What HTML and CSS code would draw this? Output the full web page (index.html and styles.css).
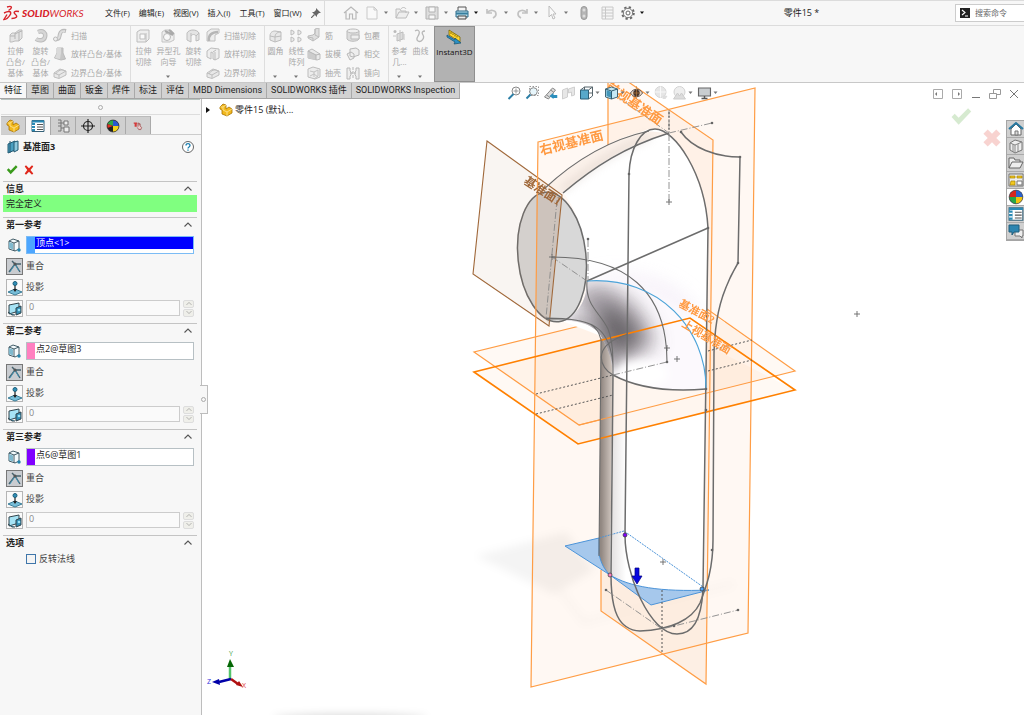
FILE: index.html
```html
<!DOCTYPE html>
<html lang="zh-CN">
<head>
<meta charset="utf-8">
<title>零件15 - SOLIDWORKS</title>
<link rel="stylesheet" href="styles.css">
</head>
<body>
<svg class="defs" aria-hidden="true">
  <symbol id="down" viewBox="0 0 6 4"><path d="M1 0.5h4L3 3z" fill="currentColor"/></symbol>
  <symbol id="chev" viewBox="0 0 10 7"><path d="M1.5 5.5L5 2l3.500 3.500" fill="none" stroke="#555" stroke-width="1.100"/></symbol>
  <symbol id="extrude" viewBox="0 0 14 14"><path d="M1 6l2-2h3l4-3h3v8l-3 3H6l-3 1H1z" fill="#e4e4e4" stroke="#bdbdbd"/><path d="M6 4v6M10 3v9M1 7h5M6 5l4-2 3-1" fill="none" stroke="#b5b5b5"/></symbol>
  <symbol id="revolve" viewBox="0 0 14 14"><path d="M4 3C9 1 12 4 11 8c-1 4-6 4-9 2" fill="none" stroke="#bbb" stroke-width="4.500"/><path d="M4 3C9 1 12 4 11 8c-1 4-6 4-9 2" fill="none" stroke="#d6d6d6" stroke-width="2.500"/></symbol>
  <symbol id="sweep" viewBox="0 0 14 14"><path d="M2 11c5 1 4-2 5-5s2-4 6-3" fill="none" stroke="#bbb" stroke-width="4"/><path d="M3 11c4 0 3-2 4-5s2-3 5-3" fill="none" stroke="#ddd" stroke-width="2"/><circle cx="2.500" cy="11" r="2" fill="#eee" stroke="#bbb"/></symbol>
  <symbol id="loft" viewBox="0 0 14 14"><path d="M4 1h6v5l2.500 6-4.500 1-6.500-2L4 6z" fill="#c6c6c6" stroke="#bbb"/><path d="M4 1h4v5l-1 6-5-1 2-5z" fill="#dadada"/></symbol>
  <symbol id="boundary" viewBox="0 0 14 14"><path d="M1 7l6-4 6 2v4l-7 3.500L1 11z" fill="#e8e8e8" stroke="#bebebe"/><path d="M1 7l5 2 7-4M6 9v3M3 8c2-4 6-5 9-3" fill="none" stroke="#bebebe"/></symbol>
  <symbol id="cut" viewBox="0 0 14 14"><path d="M1 3l3-2h9v9l-3 3H1z" fill="#eee" stroke="#bdbdbd"/><path d="M4 5h5v5H4zM10 4v9" fill="#fafafa" stroke="#bdbdbd"/></symbol>
  <symbol id="hole" viewBox="0 0 14 14"><path d="M1 3l3-2h6l3 4v6l-4 2H1z" fill="#eee" stroke="#c4c4c4"/><path d="M4 2l8 4M8 1l5 4" stroke="#aaa" stroke-width="2"/><circle cx="6" cy="8" r="3.500" fill="#f8f8f8" stroke="#b8b8b8"/></symbol>
  <symbol id="revcut" viewBox="0 0 14 14"><path d="M1 4c2-4 10-4 12 0v7l-3 1V7c-1-2-4-2-5 0v6l-4-2z" fill="#e4e4e4" stroke="#bdbdbd"/><path d="M5 7V4M10 7l3-3" stroke="#bdbdbd"/></symbol>
  <symbol id="sweepcut" viewBox="0 0 14 14"><path d="M1 4l4-3h8v4l-4 2v6H1z" fill="#ececec" stroke="#c0c0c0"/><path d="M3 13C2 7 6 4 12 4" fill="none" stroke="#b5b5b5" stroke-width="2.500"/></symbol>
  <symbol id="loftcut" viewBox="0 0 14 14"><path d="M1 4l4-3 8 1v9l-4 2-2-1V6L5 5v7l-4-2z" fill="#eee" stroke="#bcbcbc"/><path d="M9 5v8M7 5l3-2" stroke="#bbb"/></symbol>
  <symbol id="fillet" viewBox="0 0 14 14"><path d="M2 7c0-4 3-5 5-5l6 1v8l-6 2-5-2z" fill="#e8e8e8" stroke="#bdbdbd"/><path d="M2 7l5 1 6-1M7 8v5M7 8c0-3 2-5 6-5" fill="none" stroke="#bdbdbd"/></symbol>
  <symbol id="pattern" viewBox="0 0 14 14"><path d="M2 1l3 1.500v2L2 6zM9 1l3 1.500v2L9 6zM2 8l3 1.500v2L2 13zM9 8l3 1.500v2L9 13z" fill="#eee" stroke="#bbb"/></symbol>
  <symbol id="rib" viewBox="0 0 14 14"><path d="M8 1l4-1v9l-6 4-5-3v-2l5-1 2-2z" fill="#dedede" stroke="#bcbcbc"/><path d="M8 1v6l4 2M1 9l5 1v3" fill="none" stroke="#bbb"/></symbol>
  <symbol id="draft" viewBox="0 0 14 14"><path d="M1 4l4-2 8 5v5l-3 1-9-2z" fill="#e9e9e9" stroke="#bdbdbd"/><path d="M1 4l8 4v5l-8-2z" fill="#ccc"/><path d="M1 4l8 4 4-1M9 8v5" fill="none" stroke="#b5b5b5"/></symbol>
  <symbol id="shell" viewBox="0 0 14 14"><path d="M1 3l5-2 7 2v8l-5 2-7-2z" fill="#ececec" stroke="#bdbdbd"/><path d="M3 5l4 1v5M7 6l4-2v6l-4 3M3 10l4-2 4 3" fill="none" stroke="#c2c2c2"/></symbol>
  <symbol id="wrap" viewBox="0 0 14 14"><path d="M1 3v8c2 3 10 3 12 0V3z" fill="#ddd" stroke="#bbb"/><ellipse cx="7" cy="3" rx="6" ry="2" fill="#f0f0f0" stroke="#bbb"/><path d="M5 7h8v4H5z" fill="#eee" stroke="#bbb"/></symbol>
  <symbol id="intersect" viewBox="0 0 14 14"><path d="M4 2l6-1 3 2v5l-6 2-3-1zM1 7l4-2 3 2v4l-4 2-1-2z" fill="#eee" stroke="#b8b8b8"/></symbol>
  <symbol id="mirror" viewBox="0 0 14 14"><path d="M1 2h3v3l1 1v3l-1 1v3H1zM13 2h-3v3L9 6v3l1 1v3h3z" fill="#eee" stroke="#b8b8b8"/><path d="M7 1v12M4 7h6" stroke="#b5b5b5" stroke-dasharray="3 1"/></symbol>
  <symbol id="refgeo" viewBox="0 0 14 14"><circle cx="3" cy="2.500" r="1.500" fill="#bbb"/><path d="M5 5l6-2v7l-6 2z" fill="#ddd" stroke="#bdbdbd"/><path d="M1 7h3M8 13V1M12 5v6" stroke="#c6c6c6"/></symbol>
  <symbol id="curve" viewBox="0 0 14 14"><path d="M2 2c3-2 5 0 4 3s-4 5-1 7 7-3 5-6 0-4 2-4" fill="none" stroke="#b8b8b8" stroke-width="1.300"/></symbol>
  <symbol id="instant" viewBox="0 0 16 16"><path d="M3 1l11 7v5L3 6z" fill="#ffd52e" stroke="#7a6500" stroke-width=".8"/><path d="M5 3v2M7 4.500v1.500M9 5.500v2M11 7v1.500" stroke="#6a5700" stroke-width=".8"/><path d="M1 6l8 5 0-2 6 5-7 1 1-2-8-5z" fill="#2b90c4" stroke="#14506e" stroke-width=".7"/></symbol>

  <symbol id="home" viewBox="0 0 16 16"><path d="M1 8l7-6 7 6M3 7v7h3.500V9h3v5H13V7" fill="none" stroke="#b8b8b8" stroke-width="1.200"/></symbol>
  <symbol id="new" viewBox="0 0 16 16"><path d="M3 2h7l3 3v9H3zM10 2v3h3" fill="#f9f9f9" stroke="#c9c9c9"/></symbol>
  <symbol id="open" viewBox="0 0 16 16"><path d="M2 13V4h4l1 2h5v2M2 13l3-6h10l-3 6z" fill="#eee" stroke="#bcbcbc"/><path d="M7 4c1-2 4-2 5 0" fill="none" stroke="#bcbcbc"/></symbol>
  <symbol id="save" viewBox="0 0 16 16"><path d="M2 2h12v12H2z" fill="#ddd" stroke="#b3b3b3"/><path d="M5 2h6v5H5zM5 10h6v4H5z" fill="#f8f8f8" stroke="#b3b3b3"/></symbol>
  <symbol id="print" viewBox="0 0 16 16"><path d="M4 6V2h8v4" fill="#f4f4f4" stroke="#555"/><path d="M2 6h12v6H2z" fill="#b8ddec" stroke="#2d6b88"/><path d="M2 7.500h12v2H2z" fill="#367e9e"/><path d="M4 11h8v3H4z" fill="#eee" stroke="#444"/></symbol>
  <symbol id="undo" viewBox="0 0 16 16"><path d="M3 4v4h5M3 8c3-4 9-3 9 1 0 2-1 3-3 4" fill="none" stroke="#c2c2c2" stroke-width="1.700"/></symbol>
  <symbol id="pick" viewBox="0 0 16 16"><path d="M5 1v11l2.500-2.500L9 14l2-1-2-4h3z" fill="#f9f9f9" stroke="#bcbcbc"/></symbol>
  <symbol id="rebuild" viewBox="0 0 16 16"><rect x="5" y="1.500" width="6" height="13" rx="3" fill="#b5b5b5" stroke="#999"/><circle cx="8" cy="5" r="1.500" fill="#ddd"/><circle cx="8" cy="11" r="1.500" fill="#ddd"/></symbol>
  <symbol id="form" viewBox="0 0 16 16"><path d="M3 2h11v12H3z" fill="#f5f5f5" stroke="#c8c8c8"/><path d="M3 5h11M3 8h11M3 11h11M6.500 2v12" stroke="#c8c8c8"/></symbol>
  <symbol id="gear" viewBox="0 0 16 16"><circle cx="8" cy="8" r="5.800" fill="none" stroke="#666" stroke-width="2" stroke-dasharray="2.280 2.280"/><circle cx="8" cy="8" r="4.700" fill="#f6f6f6" stroke="#777"/><circle cx="8" cy="8" r="2" fill="#fff" stroke="#666"/></symbol>

  <symbol id="part" viewBox="0 0 14 14"><path d="M1 4l3-3 3 1v4l3-2 3 2v4l-5 3-5-2V7L1 6z" fill="#f2b91d" stroke="#a87200" stroke-width=".8"/><path d="M4 4l3-2M4 4L1.500 4M4 4v3l4 2 5-3M8 9v4" fill="none" stroke="#ffe69a" stroke-width=".8"/></symbol>
  <symbol id="props" viewBox="0 0 14 14"><path d="M1 1.500h12v11H1z" fill="#fff" stroke="#356178"/><path d="M1 1.500h12v2H1zM1 4h3v8H1z" fill="#2b8ab5"/><path d="M6 5.500h6M6 8h6M6 10.500h6" stroke="#555"/><path d="M1 6.500h3M1 9.500h3" stroke="#fff"/></symbol>
  <symbol id="config" viewBox="0 0 14 14"><path d="M2 1h3v11H2M2 4h3M2 7h3M5 9h3M5 4h3" fill="none" stroke="#777"/><path d="M8 2h4v4H8zM8 8h5v5H8z" fill="#eee" stroke="#777"/></symbol>
  <symbol id="target" viewBox="0 0 14 14"><circle cx="7" cy="7" r="4.500" fill="none" stroke="#222" stroke-width="1.200"/><path d="M7 0v14M0 7h14" stroke="#222" stroke-width="1.200"/></symbol>
  <symbol id="ball" viewBox="0 0 14 14"><circle cx="7" cy="7" r="6" fill="#2b4fb8"/><path d="M7 7H1A6 6 0 0 1 7 1z" fill="#d8281d"/><path d="M7 7V1A6 6 0 0 1 13 7z" fill="#2c62cc"/><path d="M7 7v6A6 6 0 0 1 1 7z" fill="#28a745"/><path d="M7 7h6a6 6 0 0 1-6 6z" fill="#f1c40f"/><circle cx="7" cy="7" r="6" fill="none" stroke="#444" stroke-width=".6"/></symbol>
  <symbol id="balldark" viewBox="0 0 14 14"><circle cx="7" cy="7" r="6" fill="#222"/><path d="M7 7L1.500 5A6 6 0 0 1 7 1z" fill="#2fa84a"/><path d="M7 7V1a6 6 0 0 1 6 6z" fill="#2858d0"/><path d="M7 7L1.500 9A6 6 0 0 1 1.500 5z" fill="#e33022"/><path d="M7 7h6a6 6 0 0 1-6 6z" fill="#f4d21c"/><circle cx="7" cy="7" r="6" fill="none" stroke="#333" stroke-width=".7"/></symbol>
  <symbol id="hand" viewBox="0 0 14 14"><path d="M1 3h2v5M3 3h3M4.500 3v5" fill="none" stroke="#d43a3a" stroke-width="1.500"/><path d="M7 8V3h1.500v3M8.500 4H10v3l2 2-1 3H8L6 9" fill="#e9c9c9" stroke="#944"/></symbol>
  <symbol id="plane" viewBox="0 0 14 14"><path d="M2 4l7-3v9l-7 3z" fill="#4a9ec0" stroke="#235a73"/><path d="M8 2l4-1v9l-4 2z" fill="#8ec9df" stroke="#235a73"/><path d="M4 1v12" stroke="#235a73"/></symbol>
  <symbol id="help" viewBox="0 0 14 14"><circle cx="7" cy="7" r="5.500" fill="#fff" stroke="#666"/><path d="M5 5.500c0-2.500 4-2.500 4 0C9 7 7 7 7 8.500M7 9.500v1.300" fill="none" stroke="#1c7fb0" stroke-width="1.300"/></symbol>
  <symbol id="ok" viewBox="0 0 14 14"><path d="M1 7l2-2 2.500 2.500L11.500 1.500 13.500 3.500 5.500 12z" fill="currentColor"/></symbol>
  <symbol id="no" viewBox="0 0 14 14"><path d="M2 3l1.500-1.500L7 5l3.500-3.500L12 3 8.700 7l3.300 4-1.500 1.500L7 9l-3.500 3.500L2 11l3-4z" fill="currentColor"/></symbol>
  <symbol id="nobig" viewBox="0 0 14 14"><path d="M1 4l3-3 3 3 3-3 3 3-3 3 3 3-3 3-3-3-3 3-3-3 3-3z" fill="currentColor"/></symbol>
  <symbol id="cube" viewBox="0 0 16 16"><path d="M3 4l4-2 6 2v8l-4 2-6-2z" fill="#f4fafc" stroke="#415b66"/><path d="M3 4l5 2 5-2M8 6v8" fill="none" stroke="#415b66"/><path d="M3 5l4 1.500v6L3 11z" fill="#7fb9ce"/><circle cx="13" cy="13" r="1.700" fill="#2585ad"/></symbol>
  <symbol id="coin" viewBox="0 0 16 16"><path d="M2 13L8 5l5 8M5 2l3 3h6" fill="none" stroke="#46616c" stroke-width="1.400"/><path d="M3 13l5-8 4 7" fill="none" stroke="#3d9ac0" stroke-width=".8"/><circle cx="8" cy="5" r="1.500" fill="#555"/></symbol>
  <symbol id="proj" viewBox="0 0 16 16"><path d="M1 12l7-3 7 3-7 3z" fill="#77bdd8" stroke="#3b7e99"/><path d="M8 5v6" stroke="#222" stroke-width="1.200"/><path d="M6 9h4l-2 3z" fill="#222"/><circle cx="8" cy="3.500" r="2" fill="#2f90b8" stroke="#1d5e7a"/></symbol>
  <symbol id="count" viewBox="0 0 16 16"><path d="M2 4l10-2v8L2 13z" fill="#a6e3f5" stroke="#32444c"/><path d="M1 11l4 3h3M9 7l5-2v7l-5 2z" fill="#348fb4" stroke="#32444c"/><circle cx="12" cy="9" r="1.300" fill="#9de2f5"/></symbol>

  <symbol id="zoomfit" viewBox="0 0 14 14"><circle cx="8.500" cy="5" r="4" fill="#fff" stroke="#888"/><path d="M6 8l-5 5" stroke="#2b7ea5" stroke-width="2"/><path d="M8.500 2.500v5M6 5h5" stroke="#999"/></symbol>
  <symbol id="zoomarea" viewBox="0 0 14 14"><path d="M4 .5h9v9H4z" fill="none" stroke="#999" stroke-dasharray="1.500 1.500"/><circle cx="8" cy="5.500" r="3.800" fill="#e8f6fb" stroke="#888"/><path d="M5 8.500l-4 4" stroke="#2b7ea5" stroke-width="2"/></symbol>
  <symbol id="prev" viewBox="0 0 14 14"><path d="M1 11l8-9 3 2-7 9zM3 9l3 2M7 4l3 2" fill="#ddd" stroke="#888"/><path d="M6 10l4-3v2h4v3h-4v1z" fill="#2c8fbd"/></symbol>
  <symbol id="section" viewBox="0 0 14 14"><path d="M1 4l5-2v9l-5 2zM7 3l6-2v8l-3 1V6L7 7z" fill="#e7e7e7" stroke="#cfcfcf"/></symbol>
  <symbol id="view" viewBox="0 0 14 14"><path d="M1 4h8v9H1z" fill="#57a8ca" stroke="#2a5f78"/><path d="M1 4l4-3h8v9l-4 3M9 4l4-3M5 1v3M9 7h4" fill="none" stroke="#56646b"/></symbol>
  <symbol id="display" viewBox="0 0 14 14"><path d="M1 3l6-2 6 2v8l-6 2-6-2z" fill="#c5e8f4" stroke="#416575"/><path d="M2 4l5 2v6l-5-2z" fill="#4395b8"/><path d="M7 5v8M1 3l6 2 6-2" fill="none" stroke="#2d5b70"/></symbol>
  <symbol id="eye" viewBox="0 0 14 14"><path d="M1 7c3-5 9-5 12 0-3 5-9 5-12 0z" fill="#fff" stroke="#574438"/><circle cx="7" cy="7" r="3.300" fill="#4a3528"/><path d="M7 0v13M2 7h10" stroke="#bd803f" stroke-width=".6"/></symbol>
  <symbol id="scene" viewBox="0 0 14 14"><circle cx="6" cy="6" r="5.500" fill="#e6e6e6" stroke="#d6d6d6"/><path d="M6 .5v11M.5 6h11" stroke="#f8f8f8"/><path d="M8 13l1-4 4 1-2 3z" fill="#dedede"/></symbol>
  <symbol id="backdrop" viewBox="0 0 14 14"><circle cx="7" cy="6" r="5.500" fill="#eee" stroke="#d2d2d2"/><path d="M1 13l4-6 2 3 2-3 4 6z" fill="#dcdcdc" stroke="#ccc"/></symbol>
  <symbol id="monitor" viewBox="0 0 14 14"><path d="M1 2h12v8H1z" fill="#c9cdd0" stroke="#666" stroke-width="1.200"/><path d="M7 10v2M4 12.500h6" stroke="#555" stroke-width="1.500"/></symbol>

  <symbol id="thome" viewBox="0 0 16 16"><path d="M3 8v6h10V8L8 3z" fill="#fff" stroke="#666"/><path d="M1 8l7-6 7 6" fill="none" stroke="#2879a1" stroke-width="2"/><path d="M7 10h3v4H7z" fill="#ddd" stroke="#777"/></symbol>
  <symbol id="books" viewBox="0 0 16 16"><path d="M2 5l5-3 7 2v8l-7 3-5-3z" fill="#eee" stroke="#777"/><path d="M2 5l5 2 7-3M5 6v8M7 7v8M10 6v8" fill="none" stroke="#888"/></symbol>
  <symbol id="folder" viewBox="0 0 16 16"><path d="M1 13V3h5l1 2h5v2M1 13l3-6h11l-3 6z" fill="#eee" stroke="#666"/></symbol>
  <symbol id="palette" viewBox="0 0 16 16"><path d="M1 2h14v12H1z" fill="#eee" stroke="#777"/><path d="M2 4h5v2H2zM9 4h5v2H9zM3 9h4v4H2z" fill="#f3c91f" stroke="#a88300" stroke-width=".7"/><path d="M9 9h5v4H9z" fill="#fff" stroke="#777"/></symbol>
  <symbol id="chat" viewBox="0 0 16 16"><path d="M7 7h8v6h-1v2l-2-2H7z" fill="#eee" stroke="#777"/><path d="M1 2h10v7H6l-2 3V9H1z" fill="#2d85b0" stroke="#205e7c"/></symbol>
</svg>

<div class="app">
  <header class="titlebar">
    <div class="logo">
      <svg class="ds" viewBox="0 0 17 17"><path d="M4 2c5-1.500 6 .5 1.500 3.500M1 8c6-3 8-1 6 2-1.500 2.500-4 4.500-6 4.500L4 9.500M16 6.500c-5-1-6 1-3.500 3s1 4-4 4" fill="none" stroke="#d8232a" stroke-width="1.400"/></svg>
      <span><b>SOLID</b>WORKS</span>
    </div>
    <nav class="menu">
      <button>文件(F)</button><button>编辑(E)</button><button>视图(V)</button><button>插入(I)</button><button>工具(T)</button><button>窗口(W)</button>
      <button aria-label="固定"><svg class="i10" viewBox="0 0 10 10"><path d="M5 0l5 5-2 0-2 2v2L1 4h2l2-2z" fill="#666"/><path d="M3.500 6.500L0 10" stroke="#666" stroke-width="1.200"/></svg></button>
    </nav>
    <div class="quick">
      <button class="wide" aria-label="主页"><svg class="i16"><use href="#home"/></svg></button>
      <button aria-label="新建"><svg class="i16"><use href="#new"/></svg><svg class="dn"><use href="#down"/></svg></button>
      <button aria-label="打开"><svg class="i16"><use href="#open"/></svg><svg class="dn"><use href="#down"/></svg></button>
      <button aria-label="保存"><svg class="i16"><use href="#save"/></svg><svg class="dn"><use href="#down"/></svg></button>
      <button aria-label="打印" class="on"><svg class="i16"><use href="#print"/></svg><svg class="dn"><use href="#down"/></svg></button>
      <button aria-label="撤消"><svg class="i16"><use href="#undo"/></svg><svg class="dn"><use href="#down"/></svg></button>
      <button aria-label="重做"><svg class="i16 flip"><use href="#undo"/></svg><svg class="dn"><use href="#down"/></svg></button>
      <button aria-label="选择"><svg class="i16"><use href="#pick"/></svg><svg class="dn"><use href="#down"/></svg></button>
      <button class="wide" aria-label="重建"><svg class="i16"><use href="#rebuild"/></svg></button>
      <button class="wide" aria-label="文件属性"><svg class="i16"><use href="#form"/></svg></button>
      <button aria-label="选项" class="on"><svg class="i16"><use href="#gear"/></svg><svg class="dn"><use href="#down"/></svg></button>
    </div>
    <h1 class="doc">零件15 *</h1>
    <label class="search"><svg class="i10" viewBox="0 0 10 10"><path d="M0 0h10v10H0z" fill="#222"/><path d="M2 2l3 2.500L2 7M5 8h3" fill="none" stroke="#fff" stroke-width="1.100"/></svg><input type="text" placeholder="搜索命令" aria-label="搜索命令"></label>
  </header>

  <div class="ribbon">
    <div class="group first">
      <button class="big"><svg class="i14"><use href="#extrude"/></svg>拉伸<br>凸台/<br>基体</button>
      <button class="big"><svg class="i14"><use href="#revolve"/></svg>旋转<br>凸台/<br>基体</button>
      <div class="col">
        <button><svg class="i14"><use href="#sweep"/></svg>扫描</button>
        <button><svg class="i14"><use href="#loft"/></svg>放样凸台/基体</button>
        <button><svg class="i14"><use href="#boundary"/></svg>边界凸台/基体</button>
      </div>
    </div>
    <div class="group">
      <button class="big"><svg class="i14"><use href="#cut"/></svg>拉伸<br>切除</button>
      <button class="big"><svg class="i14"><use href="#hole"/></svg>异型孔<br>向导<svg class="dn"><use href="#down"/></svg></button>
      <button class="big"><svg class="i14"><use href="#revcut"/></svg>旋转<br>切除</button>
      <div class="col">
        <button><svg class="i14"><use href="#sweepcut"/></svg>扫描切除</button>
        <button><svg class="i14"><use href="#loftcut"/></svg>放样切除</button>
        <button><svg class="i14"><use href="#boundary"/></svg>边界切除</button>
      </div>
    </div>
    <div class="group">
      <button class="big slim"><svg class="i14"><use href="#fillet"/></svg>圆角<svg class="dn"><use href="#down"/></svg></button>
      <button class="big slim"><svg class="i14"><use href="#pattern"/></svg>线性<br>阵列<svg class="dn"><use href="#down"/></svg></button>
      <div class="col">
        <button><svg class="i14"><use href="#rib"/></svg>筋</button>
        <button><svg class="i14"><use href="#draft"/></svg>拔模</button>
        <button><svg class="i14"><use href="#shell"/></svg>抽壳</button>
      </div>
      <div class="col">
        <button><svg class="i14"><use href="#wrap"/></svg>包覆</button>
        <button><svg class="i14"><use href="#intersect"/></svg>相交</button>
        <button><svg class="i14"><use href="#mirror"/></svg>镜向</button>
      </div>
    </div>
    <div class="group last">
      <button class="big slim"><svg class="i14"><use href="#refgeo"/></svg>参考<br>几...<svg class="dn"><use href="#down"/></svg></button>
      <button class="big slim"><svg class="i14"><use href="#curve"/></svg>曲线<svg class="dn"><use href="#down"/></svg></button>
    </div>
    <button class="instant"><svg class="i16"><use href="#instant"/></svg>Instant3D</button>
  </div>

  <main class="work">
    <nav class="tabs">
      <button class="active">特征</button><button>草图</button><button>曲面</button><button>钣金</button><button>焊件</button><button>标注</button><button>评估</button><button>MBD Dimensions</button><button>SOLIDWORKS 插件</button><button>SOLIDWORKS Inspection</button>
    </nav>

    <aside class="panel">
      <div class="grip"><i></i></div>
      <div class="ptabs">
        <button aria-label="特征树"><svg class="i14"><use href="#part"/></svg></button>
        <button class="active" aria-label="属性"><svg class="i14"><use href="#props"/></svg></button>
        <button aria-label="配置"><svg class="i14"><use href="#config"/></svg></button>
        <button aria-label="尺寸"><svg class="i14"><use href="#target"/></svg></button>
        <button aria-label="外观"><svg class="i14"><use href="#balldark"/></svg></button>
        <button aria-label="加工"><svg class="i10"><use href="#hand"/></svg></button>
      </div>
      <div class="phead"><svg class="i14"><use href="#plane"/></svg><h2>基准面3</h2><button aria-label="帮助"><svg class="i14"><use href="#help"/></svg></button></div>
      <div class="pact"><button class="yes" aria-label="确定"><svg class="i12"><use href="#ok"/></svg></button><button class="cancel" aria-label="取消"><svg class="i12"><use href="#no"/></svg></button></div>

      <section class="sec msg">
        <h3>信息<svg class="chev"><use href="#chev"/></svg></h3>
        <p class="status">完全定义</p>
      </section>

      <section class="sec">
        <h3>第一参考<svg class="chev"><use href="#chev"/></svg></h3>
        <div class="body">
          <div class="row sel"><svg class="i16"><use href="#cube"/></svg><div class="field live"><i class="sw blue"></i><input type="text" value="顶点&lt;1&gt;" aria-label="第一参考实体"></div></div>
          <div class="row"><button class="tog down"><svg class="i16"><use href="#coin"/></svg></button><span>重合</span></div>
          <div class="row"><button class="tog"><svg class="i16"><use href="#proj"/></svg></button><span>投影</span></div>
          <div class="row"><button class="tog"><svg class="i16"><use href="#count"/></svg></button><input class="num" type="text" value="0" disabled aria-label="第一参考数量"><span class="spin"><button aria-label="增加"><svg><use href="#chev"/></svg></button><button aria-label="减少"><svg><use href="#chev"/></svg></button></span></div>
        </div>
      </section>
      <section class="sec">
        <h3>第二参考<svg class="chev"><use href="#chev"/></svg></h3>
        <div class="body">
          <div class="row sel"><svg class="i16"><use href="#cube"/></svg><div class="field"><i class="sw pink"></i><input type="text" value="点2@草图3" aria-label="第二参考实体"></div></div>
          <div class="row"><button class="tog down"><svg class="i16"><use href="#coin"/></svg></button><span>重合</span></div>
          <div class="row"><button class="tog"><svg class="i16"><use href="#proj"/></svg></button><span>投影</span></div>
          <div class="row"><button class="tog"><svg class="i16"><use href="#count"/></svg></button><input class="num" type="text" value="0" disabled aria-label="第二参考数量"><span class="spin"><button aria-label="增加"><svg><use href="#chev"/></svg></button><button aria-label="减少"><svg><use href="#chev"/></svg></button></span></div>
        </div>
      </section>
      <section class="sec">
        <h3>第三参考<svg class="chev"><use href="#chev"/></svg></h3>
        <div class="body">
          <div class="row sel"><svg class="i16"><use href="#cube"/></svg><div class="field"><i class="sw violet"></i><input type="text" value="点6@草图1" aria-label="第三参考实体"></div></div>
          <div class="row"><button class="tog down"><svg class="i16"><use href="#coin"/></svg></button><span>重合</span></div>
          <div class="row"><button class="tog"><svg class="i16"><use href="#proj"/></svg></button><span>投影</span></div>
          <div class="row"><button class="tog"><svg class="i16"><use href="#count"/></svg></button><input class="num" type="text" value="0" disabled aria-label="第三参考数量"><span class="spin"><button aria-label="增加"><svg><use href="#chev"/></svg></button><button aria-label="减少"><svg><use href="#chev"/></svg></button></span></div>
        </div>
      </section>
      <section class="sec">
        <h3>选项<svg class="chev"><use href="#chev"/></svg></h3>
        <label class="check"><input type="checkbox">反转法线</label>
      </section>
      <button class="handle" aria-label="折叠"><i></i></button>
    </aside>

    <div class="view">
      <svg class="scene" viewBox="202 83 822 632" preserveAspectRatio="xMidYMin meet">
        <defs>
          <filter id="b3" x="-50%" y="-50%" width="200%" height="200%"><feGaussianBlur stdDeviation="4"/></filter>
          <filter id="b8" x="-80%" y="-80%" width="260%" height="260%"><feGaussianBlur stdDeviation="10"/></filter>
          <linearGradient id="strip" x1="601" x2="613" y1="0" y2="0" gradientUnits="userSpaceOnUse"><stop offset="0" stop-color="#918781"/><stop offset="1" stop-color="#d6ccc5"/></linearGradient>
          <linearGradient id="inner" x1="613" x2="626" y1="0" y2="0" gradientUnits="userSpaceOnUse"><stop offset="0" stop-color="#e6e4e4"/><stop offset="1" stop-color="#fff"/></linearGradient>
          <clipPath id="bend"><path d="M587 281C660 276 706 330 706 389C670 392 637 388 613 375C612 350 601 338 601 336C590 320 570 321 562 321C580 314 587 298 587 281z"/></clipPath>
        </defs>

        <g filter="url(#b3)">
          <path d="M476 556l90-24 28 38-40 24z" fill="#000" opacity=".045"/>
          <path d="M560 590l24 32 150-38" fill="none" stroke="#000" stroke-width="6" opacity=".02"/>
          <ellipse cx="350" cy="718" rx="76" ry="3" fill="#000" opacity=".2"/>
        </g>

        <g class="plane">
          <path d="M538 142L755 88L748 633L531 687z"/>
          <path d="M608 68L713 140L706 684L601 611z"/>
        </g>
        <path class="plane faint" d="M474 352L690 299L795 371L579 425z"/>
        <path class="planeline" d="M600 321L474 352L579 425L795 371L707 309"/>

        <path d="M587 281L708 228C705 190 690 155 669 133C660 127 647 128 641 132C612 139 575 160 548 186L565 195C580 215 588 250 587 281z" fill="#fff"/>
        <path d="M548 186C575 160 612 139 645 131L669 133C625 145 595 165 563 194z" fill="#fbf1ea"/>
        <path d="M562 190C595 164 625 145 650 137" fill="none" stroke="#c8b9b0" stroke-width="5" opacity=".4" filter="url(#b3)"/>
        <path d="M587 281L708 228L706 389L704 590C660 594 625 586 610 575L599 556L601 336L562 321C580 314 587 298 587 281z" fill="#fff"/>
        <path d="M590 281C640 268 680 285 700 318L690 318C660 288 630 282 590 286z" fill="#e6d6ee" opacity=".55" filter="url(#b8)"/>
        <path d="M601 338C607 342 612 350 613 375L610 575C601 568 599 563 599 552z" fill="url(#strip)"/>
        <path d="M613 375C620 380 630 384 636 386L634 586C625 584 616 580 610 575z" fill="url(#inner)"/>
        <g clip-path="url(#bend)">
          <path d="M560 275H708V392H560z" fill="#fcf9fd"/>
          <path d="M570 300L592 283C620 286 645 308 656 345L612 365L600 330z" fill="#8d868e" filter="url(#b8)" opacity=".75"/>
          <path d="M598 305C618 306 634 320 640 342L613 356L602 330z" fill="#5a565a" filter="url(#b8)" opacity=".85"/>
          <path d="M570 320C600 318 612 336 616 370" fill="none" stroke="#6c666c" stroke-width="6" opacity=".5" filter="url(#b3)"/>
          <ellipse cx="642" cy="374" rx="26" ry="13" fill="#fff" filter="url(#b3)"/>
        </g>

        <ellipse cx="552" cy="257" rx="34" ry="65" transform="rotate(-6 552 257)" fill="#d8d8d8" stroke="#6c6c6c" stroke-width="1.500"/>

        <path d="M601 611L601 570L610 578C625 586 660 594 706 590V684z" fill="#fbe9da" opacity=".6"/>
        <path class="plane tint" d="M474 372L601 341L601 439L578 444z"/>
        <path class="plane tint" d="M706 345L795 390L706 412z"/>
        <path d="M613 375C637 388 670 392 706 389V412L613 435z" fill="#fff2e8" opacity=".7"/>

        <path class="brown" d="M487 141L562 195L549 326L473 274z"/>
        <path d="M536 194C545 191 553 192 561 199L549 324L536 308z" fill="#b89580" opacity=".22"/>

        <path d="M565 546L599 538V554C601 564 605 570 610 575z" fill="#a6c8ec" stroke="#4b93d8"/>
        <path d="M610 575C630 587 660 592 709 590L651 605z" fill="#a6c8ec" stroke="#4b93d8"/>
        <path d="M599 538L624 531L706 589" fill="none" stroke="#4b93d8" stroke-dasharray="2 1"/>

        <g class="planeline">
          <path d="M538 142L755 88L748 633L531 687z"/>
          <path d="M608 145V68L713 140L706 684L601 611V570"/>
          <path d="M579 425L706 393"/>
        </g>
        <path class="bold" d="M474 372L690 318L795 390L578 444z"/>

        <g class="edge">
          <path d="M544 189C575 160 612 139 649 131" class="thin"/>
          <path d="M563 193C595 166 625 147 669 133"/>
          <path d="M625 535L629 174C630 148 641 129 655 129C675 129 705 174 708 228L703 588C702 616 695 634 677 634C650 634 625 575 625 535"/>
          <path d="M587 281L708 228M681 132C692 148 716 157 740 157L738 263C722 290 715 315 714 353L713 540C713 570 706 587 700 603C692 620 670 630 640 631C618 630 611 610 611 575L613 375"/>
          <path class="thin" d="M587 281C585 306 600 312 608 329C613 342 613 355 613 375M546 319H562C590 320 598 326 601 340L599 556M546 318C592 318 610 326 613 365"/>
          <path class="thin" d="M552 257C625 257 667 290 667 362M628 334C590 346 600 368 613 375"/>
          <path d="M613 375C637 388 670 392 706 389"/>
        </g>
        <path d="M587 281C660 276 706 330 706 388" fill="none" stroke="#4ca3d8" stroke-width="1.200"/>
        <g class="axis">
          <path d="M552 257L587 281M557 200L546 318M588 240V281M669 110V202M615 95L669 133M669 133L712 123M613 375L667 362M606 590L662 629L738 610"/>
        </g>
        <g class="dash">
          <path d="M536 394L613 375M536 414L613 395M708 351L752 340M708 371L752 360M662 590V652M669 112V132"/>
        </g>
        <g class="cross">
          <path d="M669 199v6m-3-3h6M857 311v6m-3-3h6M663 559v6m-3-3h6M677 356v6m-3-3h6M667 345v6m-3-3h6M552 254v6m-3-3h6"/>
        </g>
        <g fill="#666"><circle cx="712" cy="123" r="1.300"/><circle cx="681" cy="132" r="1.300"/><circle cx="740" cy="157" r="1.300"/><circle cx="738" cy="263" r="1.300"/><circle cx="588" cy="239" r="1.300"/><circle cx="629" cy="174" r="1.300"/><circle cx="708" cy="228" r="1.300"/><circle cx="667" cy="362" r="1.300"/><circle cx="606" cy="590" r="1.300"/><circle cx="738" cy="610" r="1.300"/><circle cx="674" cy="626" r="1.300"/><circle cx="712" cy="550" r="1.300"/><circle cx="706" cy="389" r="1.300"/><circle cx="706" cy="410" r="1.300"/></g>
        <circle cx="625" cy="535" r="2" fill="#8000ff" stroke="#333" stroke-width=".7"/>
        <circle cx="610" cy="575" r="2" fill="#ff80c0" stroke="#333" stroke-width=".7"/>
        <circle cx="702" cy="589" r="2" fill="#4da6ff" stroke="#333" stroke-width=".7"/>
        <path d="M635 568h4v8h3l-5 8-5-8h3z" fill="#0808e0" stroke="#000080" stroke-width=".7"/>

        <g class="tag">
          <text transform="translate(541 155) rotate(-14)">右视基准面</text>
          <text transform="translate(605 89) rotate(34)">前视基准面</text>
          <text class="tbrown" transform="translate(523 183) rotate(33)">基准面1</text>
          <text class="flat" transform="translate(678 306) rotate(28)">基准面2</text>
          <text class="flat" transform="translate(681 326) rotate(31)">上视基准面</text>
        </g>

        <g class="triad">
          <path d="M230 679V667" stroke="#55c46c" stroke-width="2.500"/><path d="M227 667l3-8 4 8z" fill="#056605"/>
          <path d="M231 679l-12 3" stroke="#0000a8" stroke-width="2.500"/><path d="M212 682l7-3 1 6z" fill="#0000a8"/>
          <path d="M231 679l7 5" stroke="#b01010" stroke-width="2.500"/><path d="M236 685l3-4 4 6z" fill="#b01010"/>
          <text x="229" y="656" fill="#3aa047">Y</text><text x="207" y="684" fill="#3333dd">Z</text><text x="242" y="688" fill="#e04040">X</text>
        </g>
      </svg>

      <div class="hud">
        <button aria-label="整屏显示"><svg class="i14"><use href="#zoomfit"/></svg></button>
        <button aria-label="局部放大"><svg class="i14"><use href="#zoomarea"/></svg></button>
        <button aria-label="上一视图"><svg class="i14"><use href="#prev"/></svg></button>
        <button aria-label="剖面视图"><svg class="i14"><use href="#section"/></svg></button>
        <button aria-label="视图定向"><svg class="i14"><use href="#view"/></svg><svg class="dn"><use href="#down"/></svg></button>
        <button aria-label="显示样式"><svg class="i14"><use href="#display"/></svg><svg class="dn"><use href="#down"/></svg></button>
        <button aria-label="隐藏项目"><svg class="i14"><use href="#eye"/></svg><svg class="dn"><use href="#down"/></svg></button>
        <button aria-label="编辑外观"><svg class="i14"><use href="#scene"/></svg></button>
        <button aria-label="应用布景"><svg class="i14"><use href="#backdrop"/></svg><svg class="dn"><use href="#down"/></svg></button>
        <button aria-label="视图设定"><svg class="i14"><use href="#monitor"/></svg><svg class="dn"><use href="#down"/></svg></button>
      </div>

      <div class="tree"><svg class="tri" viewBox="0 0 4 6"><path d="M0 0l4 3-4 3z" fill="#111"/></svg><svg class="i14"><use href="#part"/></svg><span>零件15 (默认...</span></div>

      <div class="win">
        <button aria-label="左窗格"><svg class="i12" viewBox="0 0 12 12"><path d="M1.500 1.500h9v9h-9z" fill="none" stroke="#aaa"/><path d="M5 4L3 6l2 2z" fill="#777"/></svg></button>
        <button aria-label="右窗格"><svg class="i12" viewBox="0 0 12 12"><path d="M1.500 1.500h9v9h-9z" fill="none" stroke="#aaa"/><path d="M7 4l2 2-2 2z" fill="#777"/></svg></button>
        <button aria-label="最小化"><svg class="i12" viewBox="0 0 12 12"><path d="M2 9.500h8" stroke="#777"/></svg></button>
        <button aria-label="还原"><svg class="i12" viewBox="0 0 12 12"><path d="M.5 5.500h7v5h-7zM4.500 5V1.500h7v5H8" fill="none" stroke="#999"/></svg></button>
        <button aria-label="关闭"><svg class="i12" viewBox="0 0 12 12"><path d="M2 2l8 8M10 2l-8 8" stroke="#777"/></svg></button>
      </div>

      <div class="confirm">
        <button class="yes" aria-label="确定"><svg class="i22"><use href="#ok"/></svg></button>
        <button class="cancel" aria-label="取消"><svg class="i20"><use href="#nobig"/></svg></button>
      </div>

      <div class="tasks">
        <button aria-label="资源"><svg class="i16"><use href="#thome"/></svg></button>
        <button aria-label="设计库"><svg class="i16"><use href="#books"/></svg></button>
        <button aria-label="文件探索器"><svg class="i16"><use href="#folder"/></svg></button>
        <button aria-label="视图调色板"><svg class="i16"><use href="#palette"/></svg></button>
        <button class="active" aria-label="外观"><svg class="i16"><use href="#ball"/></svg></button>
        <button aria-label="自定义属性"><svg class="i16"><use href="#props"/></svg></button>
        <button aria-label="论坛"><svg class="i16"><use href="#chat"/></svg></button>
      </div>
    </div>
  </main>
</div>
</body>
</html>
```
FILE: styles.css
```css
* { box-sizing: border-box; }
body {
  margin: 0;
  background: #f7f7f7;
  color: #222;
  font: 9px/12px "Open Sans", "Noto Sans CJK SC", sans-serif;
}
button, input { font: inherit; color: inherit; }
button { border: 0; padding: 0; margin: 0; background: none; }
h1, h2, h3, p { margin: 0; font-size: 9px; font-weight: 400; }
svg { display: block; flex: none; }
.defs { position: absolute; width: 0; height: 0; }
.i10 { width: 10px; height: 10px; }
.i12 { width: 12px; height: 12px; }
.i14 { width: 14px; height: 14px; }
.i16 { width: 16px; height: 16px; }
.i20 { width: 20px; height: 20px; }
.i22 { width: 22px; height: 22px; }
.flip { transform: scaleX(-1); }
.dn { width: 6px; height: 4px; color: #777; }
.on .dn { color: #111; }

.app { min-height: 100vh; display: flex; flex-direction: column; }

/* Title bar */
.titlebar {
  display: flex;
  align-items: center;
  height: 26px;
  border-top: 1px solid #dcdcdc;
  border-bottom: 1px solid #dcdcdc;
}
.logo { display: flex; align-items: center; gap: 2px; width: 101px; padding-left: 3px; color: #d8232a; font: italic 10px/12px Lato, sans-serif; }
.logo b { font-weight: 900; }
.ds { width: 17px; height: 17px; }
.menu { display: flex; align-items: center; align-self: stretch; gap: 9px; width: 224px; padding-left: 4px; border-right: 1px solid #dcdcdc; font-size: 8px; white-space: nowrap; }
.quick { display: flex; align-items: center; padding-left: 14px; }
.quick button { display: flex; align-items: center; width: 30px; height: 20px; gap: 3px; padding-left: 2px; }
.quick .wide { width: 23px; justify-content: center; padding: 0; }
.doc { flex: 1; text-align: center; }
.search { display: flex; align-items: center; gap: 5px; width: 69px; height: 18px; padding-left: 4px; background: #fff; border: 1px solid #ccc; border-right: 0; }
.search input { width: 100%; min-width: 0; padding: 0; border: 0; outline: 0; background: none; font-size: 8px; }
.search input::placeholder { color: #666; opacity: 1; }

/* Command ribbon */
.ribbon { display: flex; height: 57px; border-bottom: 1px solid #c8c8c8; font-size: 8px; line-height: 11px; color: #a8a8a8; }
.group { display: flex; padding-right: 3px; border-right: 1px solid #dedede; }
.group.first { padding-left: 3px; }
.group.last { border: 0; }
.big { display: flex; flex-direction: column; align-items: center; width: 25px; padding-top: 3px; white-space: nowrap; }
.big .i14 { margin-bottom: 2px; }
.big.slim { width: 21px; }
.big .dn { margin-top: auto; margin-bottom: 3px; }
.col { display: grid; grid-template-rows: repeat(3, 1fr); }
.col button { display: flex; align-items: center; gap: 4px; padding-right: 5px; white-space: nowrap; }
.instant { display: flex; flex-direction: column; align-items: center; gap: 1px; width: 41px; padding-top: 2px; background: #b2b2b2; border: 1px solid #8f8f8f; color: #111; }

/* Work area: tabs lie over the top edge of the viewport */
.work { flex: 1; display: grid; grid-template-columns: 202px minmax(0, 1fr); grid-template-rows: 16px 1fr; }
.tabs { grid-area: 1 / 1 / 2 / 3; justify-self: start; z-index: 2; display: flex; background: #d2d2d2; border-bottom: 1px solid #a5a5a5; font-family: Roboto, "Noto Sans CJK SC", sans-serif; }
.tabs button { padding: 0 4px; border-right: 1px solid #a9a9a9; line-height: 15px; white-space: nowrap; }
.tabs .active { background: #f7f7f7; }

/* Property panel */
.panel { grid-area: 2 / 1 / 3 / 2; position: relative; z-index: 1; border-right: 1px solid #bdbdbd; background: #f7f7f7; }
.grip { display: grid; place-items: center; height: 16px; margin: 0 1px; border-top: 1px solid #b9c4c0; border-bottom: 1px solid #ddd; }
.grip i, .handle i { width: 5px; height: 5px; border: 1px solid #aaa; border-radius: 50%; }
.ptabs { display: flex; height: 20px; margin-left: 1px; border-bottom: 1px solid #ccc; }
.ptabs button { display: grid; place-items: center; width: 25px; margin-top: 1px; background: #d0d0d0; border-right: 1px solid #aaa; border-top: 1px solid #bbb; }
.ptabs .active { background: #f7f7f7; margin-bottom: -1px; }
.phead { display: flex; align-items: center; gap: 3px; height: 24px; padding: 0 6px; }
.phead h2 { flex: 1; font-weight: 700; }
.pact { display: flex; align-items: center; gap: 5px; height: 22px; padding-left: 6px; }
.pact .yes { color: #3a9a1c; }
.pact .cancel { color: #e0281c; }
.sec { margin: 0 4px 0 3px; border-top: 1px solid #c4c4c4; }
.sec.msg { height: 36px; }
.sec h3 { display: flex; justify-content: space-between; align-items: center; height: 13px; padding: 0 4px 0 3px; font-weight: 700; }
.chev { width: 10px; height: 7px; }
.status { height: 17px; padding-left: 3px; line-height: 17px; background: #80ff80; }
.body { display: grid; gap: 3px; padding: 5px 3px 6px; }
.row { display: flex; align-items: center; gap: 3px; height: 18px; color: #444; }
.row.sel { gap: 4px; }
.field { display: flex; flex: 1; height: 18px; border: 1px solid #b7c0c4; background: #fff; color: #222; }
.field input { flex: 1; min-width: 0; height: 12px; padding: 0 0 0 1px; border: 0; outline: 0; background: none; line-height: 12px; }
.live { border-color: #7bbcf5; }
.live input { background: #0000ff; color: #fff; }
.sw { width: 8px; }
.sw.blue { background: #4da6ff; }
.sw.pink { background: #ff80c0; }
.sw.violet { background: #8000ff; }
.tog { display: grid; place-items: center; width: 17px; height: 17px; border: 1px solid #b5b5b5; background: #fafafa; }
.tog.down { background: #c9ccd0; border-color: #777; }
.num { flex: 1; min-width: 0; height: 16px; padding: 0 2px 3px; border: 1px solid #ccc; background: #fafafa; color: #888; }
.spin { display: grid; gap: 1px; width: 11px; }
.spin button { display: grid; place-items: center; height: 8px; border: 1px solid #ddd; border-radius: 2px; background: #efefea; }
.spin svg { width: 8px; height: 5px; opacity: .5; }
.spin button:last-child svg { transform: scaleY(-1); }
.check { display: flex; align-items: center; gap: 3px; padding: 4px 0 0 23px; color: #444; }
.check input { appearance: none; width: 10px; height: 10px; margin: 0; border: 1px solid #3f76aa; background: #f4f4f4; }
.handle { position: absolute; left: 200px; top: 286px; display: grid; place-items: center; width: 8px; height: 29px; border: 1px solid #bdbdbd; border-left: 0; background: #f7f7f7; }

/* Graphics area */
.view { grid-area: 1 / 2 / 3 / 3; position: relative; background: #fff; overflow: hidden; }
.scene { position: absolute; inset: 0; width: 100%; height: 100%; }
.plane { fill: #ff8c2e; fill-opacity: .06; }
.faint { fill-opacity: .05; }
.tint { fill-opacity: .05; }
.planeline { fill: none; stroke: #ff9d45; stroke-width: 1.2; }
.bold { fill: none; stroke: #ff8000; stroke-width: 1.6; }
.brown { fill: #a5714a; fill-opacity: .07; stroke: #a0683a; stroke-width: 1.1; }
.edge { fill: none; stroke: #6c6c6c; stroke-width: 1.5; }
.edge .thin { stroke-width: 1.1; }
.axis { fill: none; stroke: #888; stroke-width: .9; stroke-dasharray: 7 2 1 2; }
.dash { stroke: #555; stroke-dasharray: 2 2; }
.cross { stroke: #666; stroke-width: .9; }
.tag { font: 700 13px "Liberation Serif", "Noto Sans CJK SC", serif; fill: #ff9a42; }
.tag .tbrown { font-size: 12px; fill: #a0683a; }
.tag .flat { font-size: 11px; }
.triad { font-size: 7px; }

.hud { position: absolute; top: 3px; left: 50%; transform: translateX(-50%); display: flex; gap: 4px; }
.hud button { display: flex; align-items: center; gap: 1px; }
.tree { position: absolute; top: 20px; left: 4px; display: flex; align-items: center; gap: 2px; white-space: nowrap; }
.tree .i14 { margin-left: 7px; }
.tri { width: 4px; height: 6px; }
.win { position: absolute; top: 5px; right: 4px; display: flex; gap: 7px; }
.confirm { position: absolute; top: 23px; right: 22px; display: flex; align-items: flex-start; gap: 10px; opacity: .2; }
.confirm .yes { color: #3a9a1c; }
.confirm .cancel { margin-top: 22px; color: #e0281c; }
.tasks { position: absolute; top: 37px; right: 0; width: 18px; border: 1px solid #a5a5a5; border-right: 0; background: #d0d0d0; }
.tasks button { display: grid; place-items: center; width: 100%; height: 17px; border-bottom: 1px solid #aaa; }
.tasks .active { background: #fff; }
```
